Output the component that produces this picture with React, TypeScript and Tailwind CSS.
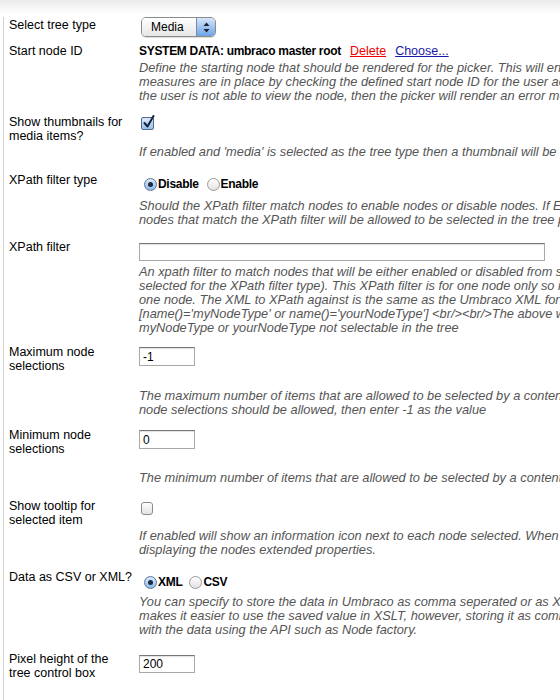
import React from "react";

function Desc({lines, className = ""}: {lines: string[]; className?: string}) {
  return (
    <div className={"text-[12.8px] italic text-[#555] " + className}>
      {lines.map((l, i) => (
        <div key={i} className="whitespace-nowrap leading-[14px]">
          {l}
        </div>
      ))}
    </div>
  );
}

function Row({label, className = "", labelClass = "", children}: {label: React.ReactNode; className?: string; labelClass?: string; children: React.ReactNode}) {
  return (
    <div className={"flex " + className}>
      <div className={"w-[130px] shrink-0 text-[12.5px] leading-[14px] " + labelClass}>{label}</div>
      <div className="min-w-0 flex-1">{children}</div>
    </div>
  );
}

function Radio({checked}: {checked?: boolean}) {
  return checked ? (
    <span className="flex h-[13px] w-[13px] items-center justify-center rounded-full border border-[#5f7597] bg-linear-to-b from-[#dbeafb] to-[#8cb8ea]">
      <span className="h-[5px] w-[5px] rounded-full bg-[#1c2a44]" />
    </span>
  ) : (
    <span className="h-[13px] w-[13px] rounded-full border border-[#9a9a9a] bg-linear-to-b from-white to-[#e2e2e2]" />
  );
}

function TextInput({value, w, h}: {value: string; w: string; h: string}) {
  return (
    <div className={"flex items-center border border-[#a9a9a9] border-t-[#777] bg-white pl-[3px] text-[12px] shadow-[inset_0_1px_1px_rgba(0,0,0,0.12)] " + w + " " + h}>
      {value}
    </div>
  );
}

export default function App() {
  return (
    <div className="h-[700px] w-[560px] overflow-hidden bg-[linear-gradient(#ebebeb,#ffffff_14px)] font-['Liberation_Sans',Arial,sans-serif] text-[13px] text-black">
      <div className="ml-[3px] h-full border-l border-[#d2d2d2] pl-[5px]">
        {/* select tree type */}
        <Row label="Select tree type" className="mt-[17px]" labelClass="pt-[1px]">
          <div className="ml-[2px] flex h-[20px] w-[75px] items-stretch overflow-hidden rounded-[5px] border border-[#8b8b8b] shadow-[0_1px_1px_rgba(0,0,0,0.15)]">
            <div className="flex flex-1 items-center bg-linear-to-b from-white to-[#e6e6e6] pl-[9px] text-[12px]">Media</div>
            <div className="flex w-[19px] flex-col items-center justify-center border-l border-[#6f8bb3] bg-linear-to-b from-[#d6e7fb] to-[#6ea3e6]">
              <svg width="7" height="11" viewBox="0 0 7 11">
                <path d="M3.5 0.5 L6.5 4 H0.5 Z" fill="#1b2232" />
                <path d="M3.5 10.5 L6.5 7 H0.5 Z" fill="#1b2232" />
              </svg>
            </div>
          </div>
        </Row>

        {/* start node */}
        <Row label="Start node ID" className="mt-[7px]">
          <div className="flex whitespace-nowrap text-[12.5px] leading-[14px]">
            <span className="text-[12px] font-bold tracking-[-0.3px]">SYSTEM DATA: umbraco master root</span>
            <span className="ml-[9px] text-[#ee0000] underline">Delete</span>
            <span className="ml-[9px] text-[#1a1aa6] underline">Choose...</span>
          </div>
          <Desc
            className="mt-[3px]"
            lines={[
              "Define the starting node that should be rendered for the picker. This will ensure that the correct security",
              "measures are in place by checking the defined start node ID for the user accessing the picker. In some cases,",
              "the user is not able to view the node, then the picker will render an error message.",
            ]}
          />
        </Row>

        {/* thumbnails */}
        <Row label={<>Show thumbnails for<br />media items?</>} className="mt-[12px]">
          <div className="mt-[2px] ml-[2px] relative h-[13px] w-[13px] rounded-[2px] border border-[#56698a] bg-linear-to-b from-[#dcebfc] to-[#98c0ee]">
            <svg className="absolute -top-[3px] left-[1px]" width="12" height="14" viewBox="0 0 12 14">
              <path d="M1.5 8 L4.5 11.5 L10.5 1" fill="none" stroke="#15233d" strokeWidth="2" strokeLinecap="round" strokeLinejoin="round" />
            </svg>
          </div>
          <Desc
            className="mt-[15px]"
            lines={["If enabled and 'media' is selected as the tree type then a thumbnail will be rendered for each item selected."]}
          />
        </Row>

        {/* xpath filter type */}
        <Row label="XPath filter type" className="mt-[14px]">
          <div className="mt-[4px] ml-[5px] flex items-center gap-[1px] text-[12px] font-bold tracking-[-0.3px] leading-[14px]">
            <Radio checked />
            <span>Disable</span>
            <span className="ml-[6px]" />
            <Radio />
            <span>Enable</span>
          </div>
          <Desc
            className="mt-[8px]"
            lines={[
              "Should the XPath filter match nodes to enable nodes or disable nodes. If Enable is selected, then only the",
              "nodes that match the XPath filter will be allowed to be selected in the tree picker.",
            ]}
          />
        </Row>

        {/* xpath filter */}
        <Row label="XPath filter" className="mt-[13px]">
          <div className="mt-[3px]">
            <TextInput value="" w="w-[406px]" h="h-[18px]" />
          </div>
          <Desc
            className="mt-[4px]"
            lines={[
              "An xpath filter to match nodes that will be either enabled or disabled from selection based on the setting",
              "selected for the XPath filter type). This XPath filter is for one node only so it should be formatted to select only",
              "one node. The XML to XPath against is the same as the Umbraco XML for one node. Example: /*",
              "[name()='myNodeType' or name()='yourNodeType'] <br/><br/>The above would make all nodes of type",
              "myNodeType or yourNodeType not selectable in the tree",
            ]}
          />
        </Row>

        {/* maximum */}
        <Row label={<>Maximum node<br />selections</>} className="mt-[10px]">
          <div className="mt-[2px]">
            <TextInput value="-1" w="w-[56px]" h="h-[19px]" />
          </div>
          <Desc
            className="mt-[23px]"
            lines={[
              "The maximum number of items that are allowed to be selected by a content editor. If unlimited",
              "node selections should be allowed, then enter -1 as the value",
            ]}
          />
        </Row>

        {/* minimum */}
        <Row label={<>Minimum node<br />selections</>} className="mt-[11px]">
          <div className="mt-[2px]">
            <TextInput value="0" w="w-[56px]" h="h-[19px]" />
          </div>
          <Desc className="mt-[22px]" lines={["The minimum number of items that are allowed to be selected by a content editor."]} />
        </Row>

        {/* tooltip */}
        <Row label={<>Show tooltip for<br />selected item</>} className="mt-[14px]">
          <div className="mt-[3px] ml-[2px] h-[13px] w-[12px] rounded-[3px] border border-[#8c8c8c] bg-linear-to-b from-white to-[#e3e3e3]" />
          <Desc
            className="mt-[14px]"
            lines={[
              "If enabled will show an information icon next to each node selected. When the icon is clicked, a tooltip is shown",
              "displaying the nodes extended properties.",
            ]}
          />
        </Row>

        {/* csv or xml */}
        <Row label="Data as CSV or XML?" className="mt-[13px]">
          <div className="mt-[5px] ml-[5px] flex items-center gap-[1px] text-[12px] font-bold tracking-[-0.3px] leading-[14px]">
            <Radio checked />
            <span>XML</span>
            <span className="ml-[5px]" />
            <Radio />
            <span>CSV</span>
          </div>
          <Desc
            className="mt-[6px]"
            lines={[
              "You can specify to store the data in Umbraco as comma seperated or as XML. By default it is stored as XML which",
              "makes it easier to use the saved value in XSLT, however, storing it as comma seperated makes it easier to work",
              "with the data using the API such as Node factory.",
            ]}
          />
        </Row>

        {/* pixel height */}
        <Row label={<>Pixel height of the<br />tree control box</>} className="mt-[15px]">
          <div className="mt-[3px]">
            <TextInput value="200" w="w-[56px]" h="h-[18px]" />
          </div>
        </Row>
      </div>
    </div>
  );
}
